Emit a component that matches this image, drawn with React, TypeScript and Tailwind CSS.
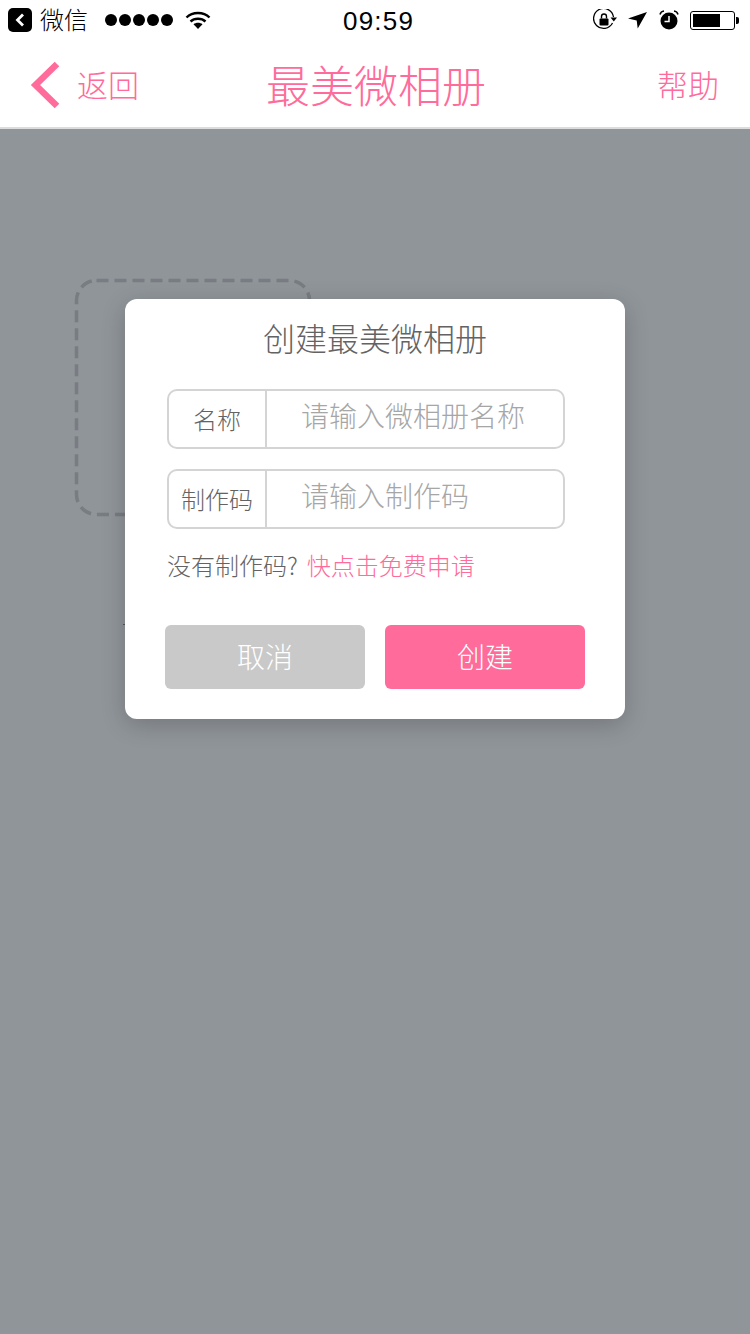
const cjk = "font-['Noto_Sans_CJK_SC','Liberation_Sans',sans-serif]";

const StatusBar = () => (
    <div className="h-10 bg-white flex items-center justify-between pl-2 pr-[11px] text-black">
        <div className="flex items-center">
            <div className="w-6 h-6 bg-black rounded-[5px] flex items-center justify-center">
                <svg width="12" height="16" viewBox="0 0 12 16" fill="none">
                    <path d="M9 2.5L3.5 8L9 13.5" stroke="white" strokeWidth="2.8" />
                </svg>
            </div>
            <span className="ml-2 mb-[2px] text-2xl leading-none font-light">微信</span>
            <div className="ml-[17px] flex gap-[2px]">
                <span className="w-3 h-3 rounded-full bg-black" />
                <span className="w-3 h-3 rounded-full bg-black" />
                <span className="w-3 h-3 rounded-full bg-black" />
                <span className="w-3 h-3 rounded-full bg-black" />
                <span className="w-3 h-3 rounded-full bg-black" />
            </div>
            <svg className="ml-3" width="26" height="20" viewBox="0 0 26 20" fill="none">
                <path d="M1.5 7.5C7.5 1.5 18.5 1.5 24.5 7.5" stroke="black" strokeWidth="2.4" />
                <path d="M5.5 11.5C9.5 7.8 16.5 7.8 20.5 11.5" stroke="black" strokeWidth="2.4" />
                <path d="M8.5 14.2C11 12.2 15 12.2 17.5 14.2L13 19Z" fill="black" />
            </svg>
        </div>
        <div className="absolute left-[343px] top-[6px] text-[26px] leading-[30px] tracking-[1.2px] font-['Liberation_Sans',sans-serif]">
            09:59
        </div>
        <div className="flex items-center">
            <svg width="24" height="22" viewBox="0 0 24 22" fill="none">
                <path d="M19.5 14A10 10 0 1 1 20.5 8" stroke="black" strokeWidth="1.3" />
                <path d="M17.5 8.5H24L20.8 12.5Z" fill="black" />
                <rect x="6.5" y="9.5" width="9" height="7" rx="1" fill="black" />
                <path d="M8.5 9.5V7.5A2.5 2.5 0 0 1 13.5 7.5V9.5" stroke="black" strokeWidth="1.4" />
            </svg>
            <svg className="ml-[11px] mt-[1px]" width="19" height="17" viewBox="0 0 19 17">
                <path d="M0 6.5L19 0L9.7 16.5L8.7 8.5Z" fill="black" />
            </svg>
            <svg className="ml-3" width="20" height="20" viewBox="0 0 20 20" fill="none">
                <circle cx="10" cy="11" r="8.5" fill="black" />
                <path d="M10 6V11.5H5.5" stroke="white" strokeWidth="1.5" />
                <path d="M1 4.5C1.5 2.5 3 1.2 5 1" stroke="black" strokeWidth="1.5" />
                <path d="M19 4.5C18.5 2.5 17 1.2 15 1" stroke="black" strokeWidth="1.5" />
            </svg>
            <div className="ml-[11px] w-[45px] h-[19px] border border-black rounded-[3px] p-[2px]">
                <div className="w-[27px] h-full bg-black" />
            </div>
            <div className="ml-[1px] w-[3px] h-[7px] bg-black rounded-r-[2px]" />
        </div>
    </div>
);

const NavBar = () => (
    <div className="relative h-[89px] bg-white border-b-2 border-[#dcdcdc] flex items-center justify-between pl-[30px] pr-[31px] text-[#ff6b9b]">
        <div className="flex items-center">
            <svg className="mt-[3px]" width="30" height="48" viewBox="0 0 30 48" fill="none">
                <path d="M27 3L5.5 24L27 45" stroke="#ff6b9b" strokeWidth="6.5" />
            </svg>
            <span className="ml-[17px] text-[31px] leading-none font-light">返回</span>
        </div>
        <span className="absolute left-[266px] top-[22px] text-[44px] leading-none font-light">最美微相册</span>
        <span className="text-[31px] leading-none font-light">帮助</span>
    </div>
);

const Field = ({ label, placeholder }: { label: string; placeholder: string }) => (
    <div className="h-[60px] border-2 border-[#d4d4d4] rounded-[10px] flex">
        <div className="w-[98px] border-r-2 border-[#d4d4d4] flex items-center justify-center text-2xl text-[#636363] font-light">
            {label}
        </div>
        <div className="pl-[34px] pb-[9px] flex items-center text-[28px] text-[#a6a6a6] font-light">{placeholder}</div>
    </div>
);

const CreateModal = () => (
    <div className="absolute left-[125px] top-[299px] w-[500px] h-[420px] bg-white rounded-xl shadow-[0_6px_24px_rgba(0,0,0,0.2)] flex flex-col px-10">
        <h2 className="mt-[18px] h-10 text-center text-[32px] leading-10 text-[#636363] font-light">创建最美微相册</h2>
        <div className="mt-[32px] ml-[2px] w-[398px] flex flex-col gap-5">
            <Field label="名称" placeholder="请输入微相册名称" />
            <Field label="制作码" placeholder="请输入制作码" />
        </div>
        <p className="mt-[18px] ml-[2px] text-2xl leading-9 text-[#636363] font-light">
            没有制作码?<span className="ml-[9px] text-[#ff6b9b]">快点击免费申请</span>
        </p>
        <div className="mt-[42px] flex gap-5">
            <button className="w-[200px] h-16 pb-[2px] rounded-md bg-[#c9c9c9] text-white text-[28px] font-light">取消</button>
            <button className="w-[200px] h-16 pb-[2px] rounded-md bg-[#ff6b9b] text-white text-[28px] font-light">创建</button>
        </div>
    </div>
);

export default function App() {
    return (
        <div className={`relative w-[750px] h-[1334px] overflow-hidden bg-[#90959a] ${cjk}`}>
            <StatusBar />
            <NavBar />
            <svg className="absolute left-[74px] top-[278px]" width="240" height="240" viewBox="0 0 240 240" fill="none">
                <rect x="2.5" y="2.5" width="233" height="234" rx="20" stroke="#787d82" strokeWidth="3.5" strokeDasharray="12 6" />
            </svg>
            <div className="absolute left-[123px] top-[624px] w-[2px] h-[1px] bg-[#555a5e]" />
            <CreateModal />
        </div>
    );
}
